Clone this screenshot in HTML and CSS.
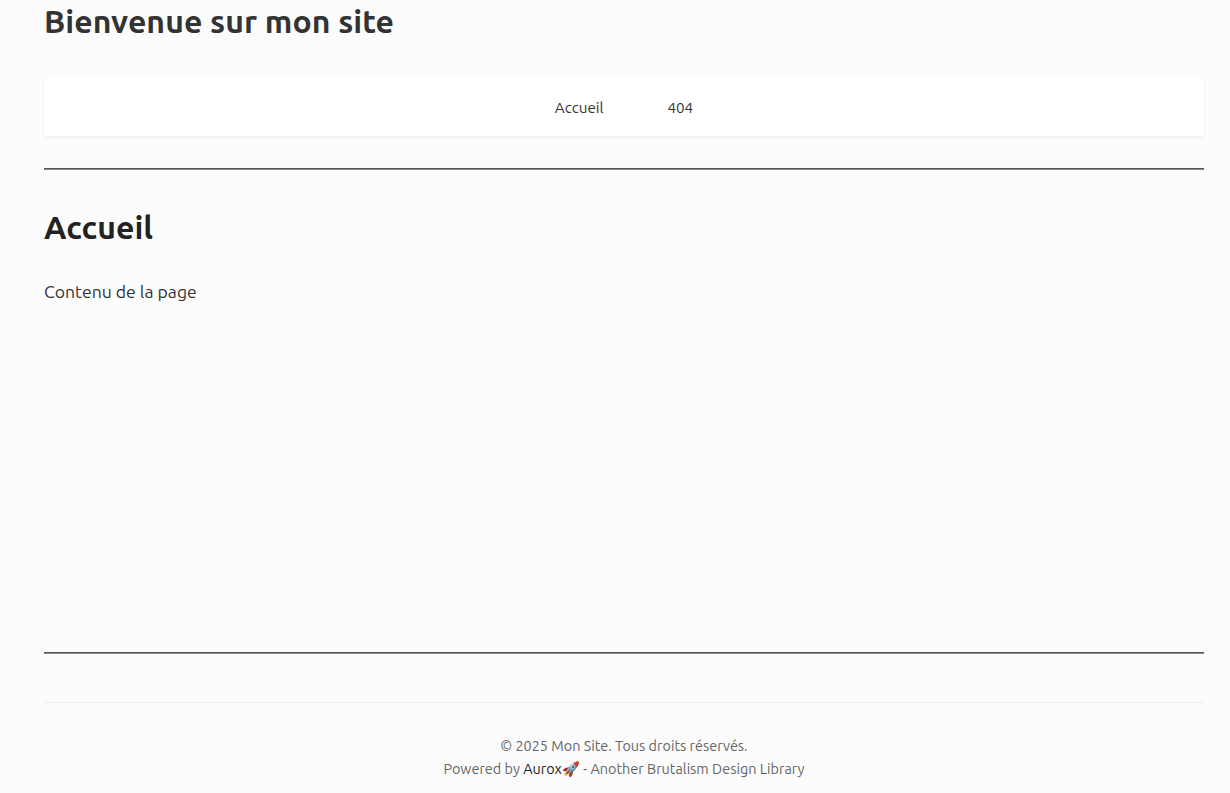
FILE: index.html
```html
<!DOCTYPE html>
<html lang="fr">
<head>
<meta charset="utf-8">
<title>Mon Site</title>
<link rel="stylesheet" href="styles.css">
</head>
<body>
<div class="page">
  <header class="header">
    <h1 class="site-title">Bienvenue sur mon site</h1>
    <nav class="nav">
      <a class="nav-link" href="#">Accueil</a>
      <a class="nav-link" href="#">404</a>
    </nav>
  </header>
  <hr class="rule">
  <main class="main">
    <h1 class="page-title">Accueil</h1>
    <p class="content">Contenu de la page</p>
  </main>
  <hr class="rule">
  <footer class="footer">
    <p class="line">© 2025 Mon Site. Tous droits réservés.</p>
    <p class="line">Powered by <a class="brand" href="#">Aurox🚀</a> - Another Brutalism Design Library</p>
  </footer>
</div>
</body>
</html>
```
FILE: styles.css
```css
* { box-sizing: border-box; }
body {
  margin: 0;
  background: #fcfcfc;
  color: #333;
  font-family: Ubuntu, "Noto Sans", "Open Sans", sans-serif;
}
.page { width: 1160px; min-height: 793px; margin-left: 44px; }
.site-title, .page-title { margin: 0; font-size: 32px; font-weight: 600; line-height: 42px; letter-spacing: .05px; }
.site-title { color: #333; }
.page-title { color: #222; }
.nav {
  display: flex;
  justify-content: center;
  gap: 64px;
  height: 58px;
  margin-top: 36px;
  align-items: center;
  background: #fff;
  box-shadow: 0 2px 4px rgba(0, 0, 0, .05);
}
.nav-link { color: #333; font-size: 15.2px; text-decoration: none; }
.rule { margin: 32px 0 0; border: 1px solid; border-color: #555 #888 #888 #555; height: 2px; }
.main { height: 482px; padding-top: 36px; }
.content { margin: 29px 0 0; font-size: 17.6px; line-height: 29px; }
.main + .rule { margin: 0; }
.footer {
  margin-top: 48px;
  padding-top: 32px;
  border-top: 1px solid #eee;
  color: #666;
  font-size: 14.4px;
  text-align: center;
}
.line { margin: 0; line-height: 23px; }
.brand { color: #222; text-decoration: none; }
```
